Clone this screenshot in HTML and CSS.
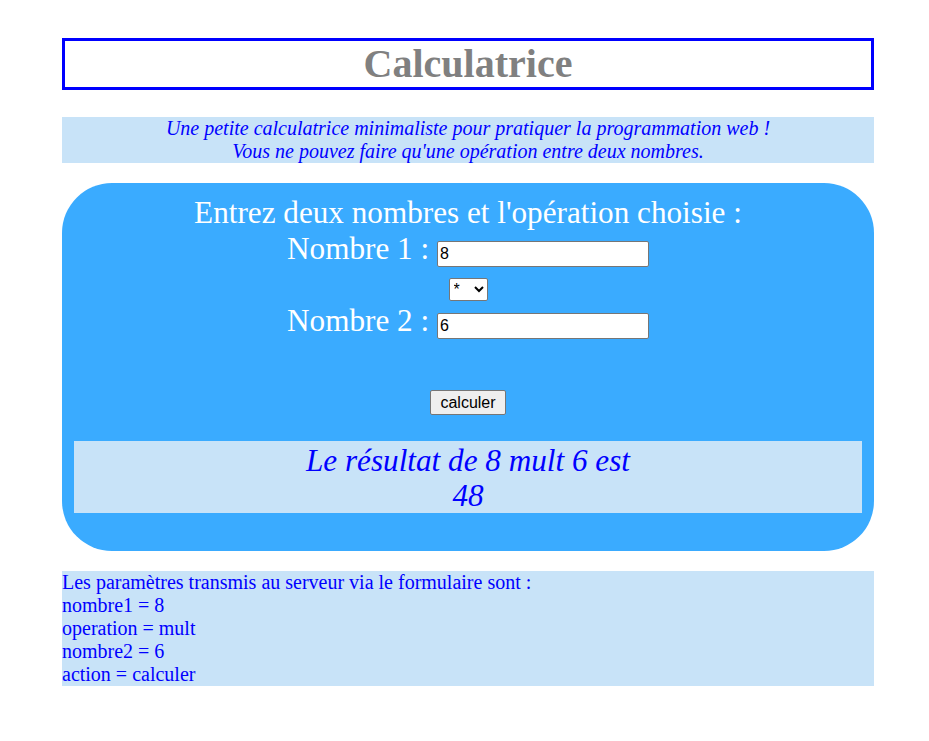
FILE: index.html
```html
<!DOCTYPE html>
<html lang="fr">
<head>
<meta charset="utf-8">
<title>Calculatrice</title>
<link rel="stylesheet" href="styles.css">
</head>
<body>
<div class="page">
  <header class="title-box">
    <h1 class="title">Calculatrice</h1>
  </header>
  <p class="intro">Une petite calculatrice minimaliste pour pratiquer la programmation web !<br>Vous ne pouvez faire qu'une opération entre deux nombres.</p>
  <form class="calc">
    <div class="fields">
      Entrez deux nombres et l'opération choisie :<br>
      Nombre 1 : <input class="num" type="text" value="8"><br>
      <select class="op"><option>*</option></select><br>
      Nombre 2 : <input class="num" type="text" value="6">
    </div>
    <div class="actions">
      <button class="btn" type="button">calculer</button>
    </div>
    <div class="result">Le résultat de 8 mult 6 est<br>48</div>
  </form>
  <div class="params">Les paramètres transmis au serveur via le formulaire sont :<br>nombre1 = 8<br>operation = mult<br>nombre2 = 6<br>action = calculer</div>
</div>
</body>
</html>
```
FILE: styles.css
```css
html, body {
  margin: 0;
  padding: 0;
  background: #ffffff;
}
body {
  font-family: "Liberation Serif", "Times New Roman", serif;
}
.page {
  width: 812px;
  margin: 0 0 0 62px;
  padding-top: 38px;
}
.title-box {
  border: 3px solid #0000ff;
}
.title {
  margin: 0;
  font-size: 40px;
  font-weight: bold;
  color: #808080;
  text-align: center;
  line-height: 46px;
}
.intro {
  margin: 27px 0 0 0;
  background: #c8e3f8;
  color: #0000ff;
  font-style: italic;
  font-size: 20px;
  line-height: 23px;
  text-align: center;
}
.calc {
  margin: 20px 0 0 0;
  background: #3aabff;
  border-radius: 50px;
  padding: 12px 12px 38px 12px;
}
.fields {
  color: #ffffff;
  font-size: 31.2px;
  line-height: 36px;
  text-align: center;
}
.num {
  box-sizing: border-box;
  width: 212px;
  height: 26px;
  font-family: "Liberation Sans", Arial, sans-serif;
  font-size: 16px;
  padding: 1px 2px;
  border: 1px solid #767676;
  border-radius: 2px;
  background: #ffffff;
  color: #000000;
  vertical-align: baseline;
}
.op {
  box-sizing: border-box;
  width: 39px;
  height: 23px;
  font-family: "Liberation Sans", Arial, sans-serif;
  font-size: 16px;
  border: 1px solid #767676;
  border-radius: 2px;
  background: #ffffff;
  color: #000000;
}
.actions {
  padding-top: 51px;
  height: 25px;
  line-height: 25px;
  text-align: center;
}
.btn {
  box-sizing: border-box;
  height: 25px;
  width: 76px;
  font-family: "Liberation Sans", Arial, sans-serif;
  font-size: 16px;
  background: #efefef;
  border: 1px solid #767676;
  border-radius: 2px;
  color: #000000;
  padding: 1px 6px;
  vertical-align: top;
}
.result {
  margin-top: 26px;
  padding-top: 2px;
  background: #c8e3f8;
  color: #0000ff;
  font-style: italic;
  font-size: 31.2px;
  line-height: 35px;
  text-align: center;
}
.params {
  margin-top: 20px;
  background: #c8e3f8;
  color: #0000ff;
  font-size: 20px;
  line-height: 23px;
}
```
